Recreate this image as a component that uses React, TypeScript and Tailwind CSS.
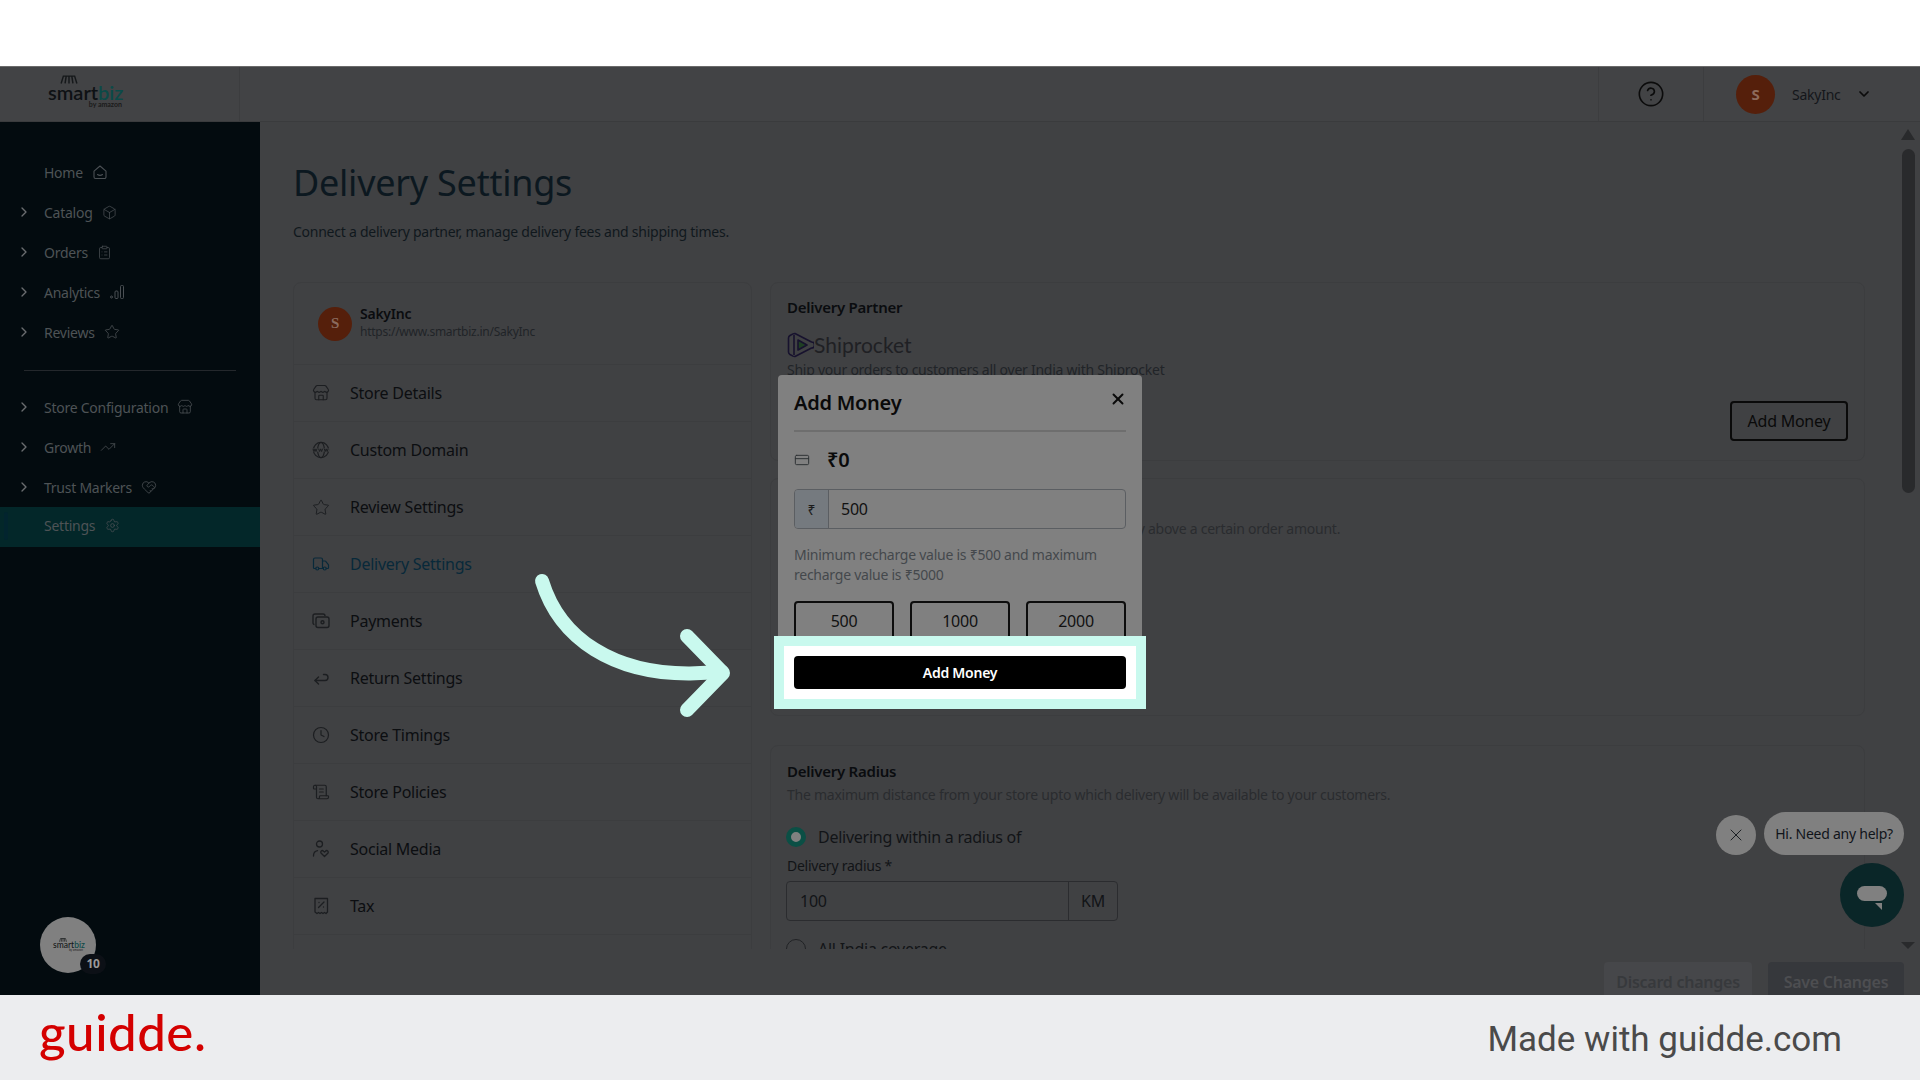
import React from "react";
import {
  Box, ChevronRight, ChevronDown, ClipboardList, Star, Store, TrendingUp, HeartHandshake, Settings,
  Truck, Clock, ScrollText, X, CircleHelp, CreditCard,
} from "lucide-react";

const sans = "font-['Noto_Sans','Open_Sans',sans-serif]";

function HomeIcon() {
  return (
    <svg width="16" height="16" viewBox="0 0 16 16" fill="none" stroke="#4b5054" strokeWidth="1.1">
      <path d="M2 7.2 8 2l6 5.2V13a1.5 1.500 0 0 1-1.500 1.500h-9A1.500 1.500 0 0 1 2 13Z" strokeLinejoin="round" />
      <path d="M5.500 10.500c1.500 1 3.500 1 5 0" strokeLinecap="round" />
    </svg>
  );
}

function BarsIcon() {
  return (
    <svg width="16" height="16" viewBox="0 0 16 16" fill="none" stroke="#4b5054" strokeWidth="1">
      <circle cx="2.500" cy="13" r="1" />
      <rect x="6" y="7" width="3" height="7.500" rx="1" />
      <rect x="11.500" y="1.500" width="3" height="13" rx="1" />
    </svg>
  );
}

function WwwIcon() {
  return (
    <svg width="18" height="18" viewBox="0 0 18 18" fill="none" stroke="#1c1e21" strokeWidth="1.2">
      <circle cx="9" cy="9" r="7.600" />
      <ellipse cx="9" cy="9" rx="3.400" ry="7.600" />
      <path d="M1 9h16" strokeWidth="3.400" stroke="#404143" />
      <path d="M1 7.700l1 2.800 1-2.600 1 2.600 1-2.800M6.600 7.700l1 2.800 1-2.600 1 2.600 1-2.800M12.200 7.700l1 2.800 1-2.600 1 2.600 1-2.800" strokeWidth="1" />
    </svg>
  );
}

function SocialIcon() {
  return (
    <svg width="18" height="18" viewBox="0 0 18 18" fill="none" stroke="#1c1e21" strokeWidth="1.300">
      <circle cx="7.500" cy="4" r="3" />
      <path d="M1.500 16c0-3 1.300-5 4-5.400" strokeLinecap="round" />
      <path d="M12.500 16.500 9.200 13.200c-1.400-1.600.9-3.600 2.300-2l1 .9 1-.9c1.400-1.600 3.700.4 2.300 2Z" strokeLinejoin="round" />
    </svg>
  );
}

function PaymentsIcon() {
  return (
    <svg width="18" height="18" viewBox="0 0 18 18" fill="none" stroke="#1c1e21" strokeWidth="1.400">
      <path d="M2.500 12.500A1.500 1.500 0 0 1 1 11V4a2 2 0 0 1 2-2h8a2 2 0 0 1 2 2" />
      <rect x="4" y="5" width="13" height="10.500" rx="2" />
      <circle cx="10.500" cy="10.200" r="1.500" />
    </svg>
  );
}

function ReturnIcon() {
  return (
    <svg width="18" height="18" viewBox="0 0 18 18" fill="none" stroke="#1c1e21" strokeWidth="1.400" strokeLinecap="round" strokeLinejoin="round">
      <path d="M3 11.500h10a3 3 0 0 0 0-6h-1.500" />
      <path d="M6.500 8 3 11.500 6.500 15" />
    </svg>
  );
}

function TaxIcon() {
  return (
    <svg width="18" height="18" viewBox="0 0 18 18" fill="none" stroke="#1c1e21" strokeWidth="1.300" strokeLinecap="round" strokeLinejoin="round">
      <path d="M3 1.500h12.500V15l-1.500 1.500-1.500-1-1.500 1-1.500-1-1.500 1-1.500-1-1.500 1L3 15Z" />
      <path d="M6.500 10.500 12 5M7 5.500h.01M11.500 10h.01" />
    </svg>
  );
}

function SmartbizLogo({ small }: { small?: boolean }) {
  return (
    <div className={small ? "relative w-[30px] h-[14px] leading-none tracking-normal" : "relative w-[74px] h-[28px] leading-none tracking-normal -mt-[4px]"}>
      <svg
        className={small ? "absolute left-[6px] top-0" : "absolute left-[12px] -top-[3px]"}
        width={small ? 8 : 18}
        height={small ? 4 : 9}
        viewBox="0 0 16 8"
        fill="none"
        stroke="#15181a"
        strokeWidth="1.300"
      >
        <path d="M1 7.500 3 1h10l2 6.500M5.500 1 4.500 7.500M8 1v6.500M10.500 1l1 6.500" />
      </svg>
      <div className={small ? "absolute top-[3px] left-0 font-['Lato',sans-serif] font-medium text-[8.500px] text-[#15181a]" : "absolute top-[4px] left-0 font-['Lato',sans-serif] font-semibold text-[20px] text-[#0e1114]"}>
        smart<span className="text-[#0c4a48]">biz</span>
      </div>
      <div className={small ? "absolute top-[11px] right-0 font-['Lato',sans-serif] text-[3px] text-[#222]" : "absolute top-[23px] right-0 font-['Lato',sans-serif] font-bold text-[7px] text-[#1a1a1a]"}>
        by amazon
      </div>
    </div>
  );
}

const navTop: [string, React.ReactNode, boolean][] = [
  ["Home", <HomeIcon />, false],
  ["Catalog", <Box size={15} strokeWidth={1.2} />, true],
  ["Orders", <ClipboardList size={15} strokeWidth={1.2} />, true],
  ["Analytics", <BarsIcon />, true],
  ["Reviews", <Star size={16} strokeWidth={1.2} />, true],
];
const navBottom: [string, React.ReactNode][] = [
  ["Store Configuration", <Store size={16} strokeWidth={1.2} />],
  ["Growth", <TrendingUp size={16} strokeWidth={1.2} />],
  ["Trust Markers", <HeartHandshake size={16} strokeWidth={1.2} />],
];

function NavRow({ label, icon, chevron }: { label: string; icon: React.ReactNode; chevron: boolean }) {
  return (
    <div className="h-[40px] flex items-center relative pl-[44px] gap-[9px] text-[14px] text-[#4e5356]">
      {chevron && <ChevronRight size={16} strokeWidth={2} className="absolute left-[16px] top-[12px] text-[#6a6d70]" />}
      <span>{label}</span>
      <span className="text-[#4b5054] flex">{icon}</span>
    </div>
  );
}

function Sidebar() {
  return (
    <aside className="w-[260px] shrink-0 bg-[#030b0f] flex flex-col pt-[30px]">
      {navTop.map(([l, i, c]) => <NavRow key={l} label={l} icon={i} chevron={c} />)}
      <div className="mx-[24px] mt-[18px] mb-[16px] h-[1px] bg-[#24282c]" />
      {navBottom.map(([l, i]) => <NavRow key={l} label={l} icon={i} chevron={true} />)}
      <div className="h-[40px] bg-[#032729] relative flex items-center pl-[44px] gap-[10px] text-[14px] text-[#4e5356]">
        <span className="absolute left-[4px] top-[5px] w-[4px] h-[28px] rounded-sm bg-[#02242e]" />
        <span className="-mt-[3px]">Settings</span>
        <Settings size={15} strokeWidth={1.2} className="text-[#4b5054] -mt-[3px]" />
      </div>
      <div className="flex-1" />
      <div className="relative ml-[40px] mb-[22px] w-[56px] h-[56px] rounded-full bg-[#808080] flex items-center justify-center">
        <SmartbizLogo small />
        <span className="absolute left-[40px] top-[37px] w-[26px] h-[20px] rounded-full bg-[#0c1016] text-[12px] font-bold text-[#9a9a9a] flex items-center justify-center">10</span>
      </div>
    </aside>
  );
}

const menu: [string, React.ReactNode][] = [
  ["Store Details", <Store size={18} strokeWidth={1.5} />],
  ["Custom Domain", <WwwIcon />],
  ["Review Settings", <Star size={19} strokeWidth={1.3} />],
  ["Delivery Settings", <Truck size={18} strokeWidth={1.6} />],
  ["Payments", <PaymentsIcon />],
  ["Return Settings", <ReturnIcon />],
  ["Store Timings", <Clock size={18} strokeWidth={1.6} />],
  ["Store Policies", <ScrollText size={18} strokeWidth={1.6} />],
  ["Social Media", <SocialIcon />],
  ["Tax", <TaxIcon />],
];

function LeftCard() {
  return (
    <div className="w-[459px] shrink-0 border border-[#3c3d3f] rounded-[8px]">
      <div className="h-[82px] flex items-center pl-[24px] gap-[8px] border-b border-[#3c3d3f]">
        <div className="w-[34px] h-[34px] rounded-full bg-[#551f0b] flex items-center justify-center text-[#8a6a5e] font-bold text-[15px] font-['Liberation_Serif',serif]">S</div>
        <div className="flex flex-col -mt-[2px]">
          <span className="text-[14px] leading-[18px] font-semibold text-[#0a0c0f]">SakyInc</span>
          <span className="text-[12px] leading-[18px] text-[#212428]">https://www.smartbiz.in/SakyInc</span>
        </div>
      </div>
      {menu.map(([label, icon]) => {
        const active = label === "Delivery Settings";
        return (
          <div key={label} className={"h-[57px] flex items-center pl-[18px] border-b border-[#3c3d3f] text-[16px] " + (active ? "text-[#08293a]" : "text-[#0c0e11]")}>
            <span className={"w-[18px] flex justify-center mr-[20px] " + (active ? "text-[#08293a]" : "text-[#1c1e21]")}>{icon}</span>
            {label}
          </div>
        );
      })}
    </div>
  );
}

function RightCol() {
  return (
    <div className="w-[1095px] shrink-0 flex flex-col gap-[17px]">
      <section className="relative h-[179px] border border-[#3c3d3f] rounded-[8px] pt-[14px] px-[16px]">
        <h3 className="text-[15px] leading-[20px] font-semibold text-[#0a0c0f]">Delivery Partner</h3>
        <div className="mt-[13px] flex items-center h-[30px]">
          <svg width="27" height="26" viewBox="0 0 27 26" fill="none" stroke="#17122e" strokeWidth="1.600" strokeLinejoin="round">
            <path d="M8 1.500 24.500 10a3 3 0 0 1 0 6L8 24.500a4 4 0 0 1-2-.4l-3-1.600A3 3 0 0 1 1.500 20V6A3 3 0 0 1 3 3.500l3-1.600A4 4 0 0 1 8 1.500Z" />
            <path d="M7 3v20" />
            <path d="M11 8l9 5-9 5Z" fill="#1f3f23" />
          </svg>
          <span className="font-['Lato',sans-serif] text-[21px] text-[#1f2024] tracking-normal">Shiprocket</span>
        </div>
        <p className="text-[14px] leading-[20px] text-[#212428]">Ship your orders to customers all over India with Shiprocket</p>
        <button className="absolute right-[16px] top-[118px] w-[118px] h-[40px] border-2 border-[#0a0a0a] rounded-[4px] text-[16px] text-[#0a0a0a]">Add Money</button>
      </section>
      <section className="h-[238px] border border-[#3c3d3f] rounded-[8px] pt-[40px] px-[16px]">
        <p className="text-[14px] leading-[20px] text-[#2a2c2f]">Charge your customers delivery fee or offer free delivery above a certain order amount.</p>
      </section>
      <section className="h-[260px] mt-[12px] border border-[#3c3d3f] rounded-[8px] px-[16px] pt-[15px]">
        <h3 className="text-[15px] leading-[20px] font-semibold text-[#0a0c0f]">Delivery Radius</h3>
        <p className="mt-[4px] text-[14px] leading-[20px] text-[#2a2c2f]">The maximum distance from your store upto which delivery will be available to your customers.</p>
        <div className="mt-[22px] flex items-center gap-[12px] h-[20px] -ml-[1px]">
          <span className="w-[20px] h-[20px] rounded-full border-[5px] border-[#0b4f45] bg-[#808080]" />
          <span className="text-[16px] text-[#121417]">Delivering within a radius of</span>
        </div>
        <div className="mt-[9px] text-[14px] leading-[20px] text-[#121417]">Delivery radius *</div>
        <div className="mt-[5px] -ml-[1px] w-[332px] h-[40px] flex border border-[#2b2c2f] rounded-[4px] text-[16px] text-[#121417]">
          <div className="flex-1 flex items-center pl-[13px]">100</div>
          <div className="w-[49px] flex items-center justify-center border-l border-[#2b2c2f]">KM</div>
        </div>
        <div className="mt-[18px] -ml-[1px] flex items-center gap-[12px] h-[20px]">
          <span className="w-[20px] h-[20px] rounded-full border border-[#202225]" />
          <span className="text-[16px] text-[#121417]">All India coverage</span>
        </div>
      </section>
    </div>
  );
}

function ScrollBar() {
  return (
    <div className="absolute right-[5px] top-[7px] bottom-0 w-[14px] flex flex-col items-center">
      <span className="w-0 h-0 border-x-[7px] border-x-transparent border-b-[11px] border-b-[#292a2c]" />
      <span className="mt-[9px] w-[13px] h-[344px] rounded-full bg-[#292a2c]" />
      <span className="flex-1" />
      <span className="w-0 h-0 border-x-[7px] border-x-transparent border-t-[7px] border-t-[#292a2c]" />
    </div>
  );
}

function Main() {
  return (
    <main className="flex-1 min-w-0 flex flex-col">
      <div className="relative h-[827px] overflow-hidden pl-[33px]">
        <h1 className="mt-[36px] text-[36px] leading-[50px] text-[#0c1820]">Delivery Settings</h1>
        <p className="mt-[14px] text-[14px] leading-[20px] text-[#10181d]">Connect a delivery partner, manage delivery fees and shipping times.</p>
        <div className="mt-[40px] flex gap-[18px]">
          <LeftCard />
          <RightCol />
        </div>
        <ScrollBar />
      </div>
      <div className="h-[46px] flex justify-end gap-[16px] pt-[13px] pr-[16px] overflow-hidden">
        <div className="w-[148px] h-[40px] rounded-[4px] bg-[#46474a] text-[16px] font-semibold text-[#37393c] flex items-center justify-center">Discard changes</div>
        <div className="w-[136px] h-[40px] rounded-[4px] bg-[#36383c] text-[16px] font-semibold text-[#4d4e51] flex items-center justify-center">Save Changes</div>
      </div>
    </main>
  );
}

function Modal() {
  return (
    <div className="absolute left-[778px] top-[375px] w-[364px] h-[330px] rounded-[4px] bg-[#808080] px-[16px]">
      <div className="h-[57px] flex items-center justify-between border-b-2 border-[#6e6e6e]">
        <h2 className="text-[20px] font-semibold text-[#0a0a0a] mt-[1px]">Add Money</h2>
        <X size={18} strokeWidth={2.6} className="text-[#0a0a0a] -mt-[7px] -mr-[1px]" />
      </div>
      <div className="mt-[16px] h-[24px] flex items-center gap-[17px]">
        <CreditCard size={16} strokeWidth={1.5} className="text-[#2f3336]" />
        <span className="text-[20px] font-semibold text-[#0a0a0a]">₹0</span>
      </div>
      <div className="mt-[17px] h-[40px] flex border border-[#5b5e62] rounded-[4px] overflow-hidden">
        <div className="w-[34px] bg-[#757a7f] border-r border-[#5b5e62] flex items-center justify-center text-[14px] text-[#1c1c1c]">₹</div>
        <div className="flex-1 flex items-center pl-[12px] text-[16px] text-[#111]">500</div>
      </div>
      <p className="mt-[16px] text-[14px] leading-[20px] text-[#44484c]">Minimum recharge value is ₹500 and maximum<br />recharge value is ₹5000</p>
      <div className="mt-[16px] grid grid-cols-3 gap-[16px]">
        {["500", "1000", "2000"].map((v) => (
          <div key={v} className="h-[40px] border-2 border-[#0d0d0d] rounded-[4px] flex items-center justify-center text-[16px] text-[#111]">{v}</div>
        ))}
      </div>
    </div>
  );
}

export default function App() {
  return (
    <div className={"relative w-[1920px] h-[1080px] overflow-hidden bg-white flex flex-col tracking-[-0.25px] " + sans}>
      <div className="h-[66px] shrink-0 bg-white" />
      <header className="h-[56px] shrink-0 bg-[#424345] border-t border-[#6a6a6a] border-b border-b-[#3a3b3d] flex items-center">
        <div className="w-[240px] h-full border-r border-[#3c3d3f] pl-[48px] flex items-center"><SmartbizLogo /></div>
        <div className="flex-1" />
        <div className="w-[106px] h-full border-x border-[#3c3d3f] flex items-center justify-center">
          <CircleHelp size={28} strokeWidth={1.4} className="text-[#0b0b0b]" />
        </div>
        <div className="w-[216px] h-full flex items-center pl-[32px]">
          <div className="w-[39px] h-[39px] rounded-full bg-[#551f0b] text-[#8d6a5c] font-bold text-[15px] flex items-center justify-center">S</div>
          <span className="ml-[17px] text-[14px] text-[#14161a]">SakyInc</span>
          <ChevronDown size={16} strokeWidth={2.6} className="ml-[15px] text-[#0b0b0b]" />
        </div>
      </header>
      <div className="h-[873px] shrink-0 flex bg-[#404143]">
        <Sidebar />
        <Main />
      </div>
      <footer className="flex-1 bg-[#ecedef] flex items-center justify-between pl-[39px] pr-[78px] tracking-normal">
        <span className="font-['Lato',sans-serif] text-[51px] leading-none font-medium tracking-[0.5px] text-[#d40000] -mt-[12px]">guidde.</span>
        <span className="font-['Roboto',sans-serif] text-[35px] text-[#4a4a4a] mt-[5px]">Made with guidde.com</span>
      </footer>

      <Modal />

      <div className="absolute left-[774px] top-[636px] w-[372px] h-[73px] bg-white border-[10px] border-[#c9f9ee] p-[10px]">
        <button className="w-full h-[33px] rounded-[4px] bg-black text-white text-[14px] font-semibold">Add Money</button>
      </div>

      <svg className="absolute left-[530px] top-[570px]" width="210" height="150" viewBox="530 570 210 150" fill="none" stroke="#c9f9ee" strokeWidth="14" strokeLinecap="round" strokeLinejoin="round">
        <path d="M542 581C560 640 615 674 690 673.500L722 672" />
        <path d="M687 636 723 673 687 710" />
      </svg>

      <div className="absolute left-[1716px] top-[815px] w-[40px] h-[40px] rounded-full bg-[#808080] flex items-center justify-center">
        <X size={20} strokeWidth={1.2} className="text-[#1c2024]" />
      </div>
      <div className="absolute left-[1764px] top-[812px] w-[140px] h-[43px] rounded-[22px] bg-[#808080] text-[14px] text-[#10141a] flex items-center justify-center">Hi. Need any help?</div>
      <div className="absolute left-[1840px] top-[863px] w-[64px] h-[64px] rounded-full bg-[#0a2628]">
        <span className="absolute left-[17px] top-[23px] w-[30px] h-[15px] rounded-[8px] bg-[#808080]" />
        <svg className="absolute left-[35px] top-[40px]" width="7" height="7" viewBox="0 0 7 7"><path d="M0 0h7v7Z" fill="#808080" /></svg>
      </div>
    </div>
  );
}
